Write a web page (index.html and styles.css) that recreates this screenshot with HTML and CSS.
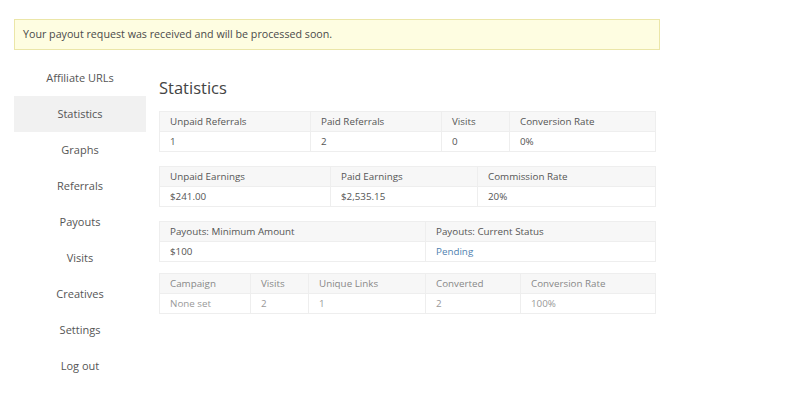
FILE: index.html
```html
<!DOCTYPE html>
<html>
<head>
<meta charset="utf-8">
<link rel="stylesheet" href="styles.css">
</head>
<body>
<div class="page">
  <div class="notice">Your payout request was received and will be processed soon.</div>
  <div class="main">
    <nav class="side">
      <a class="item">Affiliate URLs</a>
      <a class="item active">Statistics</a>
      <a class="item">Graphs</a>
      <a class="item">Referrals</a>
      <a class="item">Payouts</a>
      <a class="item">Visits</a>
      <a class="item">Creatives</a>
      <a class="item">Settings</a>
      <a class="item">Log out</a>
    </nav>
    <section class="content">
      <h1>Statistics</h1>
      <table class="stats">
        <colgroup><col class="c151"><col class="c131"><col class="c68"><col></colgroup>
        <tr><th>Unpaid Referrals</th><th>Paid Referrals</th><th>Visits</th><th>Conversion Rate</th></tr>
        <tr><td>1</td><td>2</td><td>0</td><td>0%</td></tr>
      </table>
      <table class="stats">
        <colgroup><col class="c171"><col class="c147"><col></colgroup>
        <tr><th>Unpaid Earnings</th><th>Paid Earnings</th><th>Commission Rate</th></tr>
        <tr><td>$241.00</td><td>$2,535.15</td><td>20%</td></tr>
      </table>
      <table class="stats">
        <colgroup><col class="c266"><col></colgroup>
        <tr><th>Payouts: Minimum Amount</th><th>Payouts: Current Status</th></tr>
        <tr><td>$100</td><td class="link">Pending</td></tr>
      </table>
      <table class="stats light">
        <colgroup><col class="c91"><col class="c58"><col class="c117"><col class="c95"><col></colgroup>
        <tr><th>Campaign</th><th>Visits</th><th>Unique Links</th><th>Converted</th><th>Conversion Rate</th></tr>
        <tr><td>None set</td><td>2</td><td>1</td><td>2</td><td>100%</td></tr>
      </table>
    </section>
  </div>
</div>
</body>
</html>
```

FILE: styles.css
```css
* { box-sizing: border-box; }
body {
  margin: 0;
  background: #fff;
  font-family: "Open Sans", "Liberation Sans", sans-serif;
  color: #555;
}
.page { padding: 19px 14px 0 14px; }
.notice {
  width: 646px;
  height: 31px;
  background: #fefde1;
  border: 1px solid #ebe6a8;
  font-size: 10.7px;
  line-height: 29px;
  padding-left: 8px;
  color: #4a4a4a;
}
.main {
  display: flex;
  margin-top: 10px;
  gap: 13px;
}
.side {
  width: 132px;
  display: flex;
  flex-direction: column;
}
.item {
  height: 36px;
  line-height: 36px;
  text-align: center;
  font-size: 11px;
  color: #555;
}
.item.active { background: #f1f1f1; }
.content { width: 497px; }
h1 {
  margin: 18px 0 13px 0;
  font-size: 16.5px;
  line-height: 20px;
  font-weight: 400;
  color: #444;
}
.stats {
  width: 497px;
  table-layout: fixed;
  border-collapse: collapse;
  border: 1px solid #eee;
  margin-bottom: 14px;
  font-size: 9.8px;
}
.stats th, .stats td {
  height: 20px;
  padding: 0 0 0 10px;
  text-align: left;
  font-weight: 400;
  border-left: 1px solid #eee;
  white-space: nowrap;
}
.stats th { background: #f7f7f7; color: #555; }
.stats td { border-top: 1px solid #eee; color: #555; }
.stats td.link { color: #4f7fb0; }
.stats.light th { color: #888; }
.stats.light td { color: #999; }
.stats.light { margin-top: -3px; }
.c151 { width: 151px; }
.c131 { width: 131px; }
.c68 { width: 68px; }
.c171 { width: 171px; }
.c147 { width: 147px; }
.c266 { width: 266px; }
.c91 { width: 91px; }
.c58 { width: 58px; }
.c117 { width: 117px; }
.c95 { width: 95px; }
```
